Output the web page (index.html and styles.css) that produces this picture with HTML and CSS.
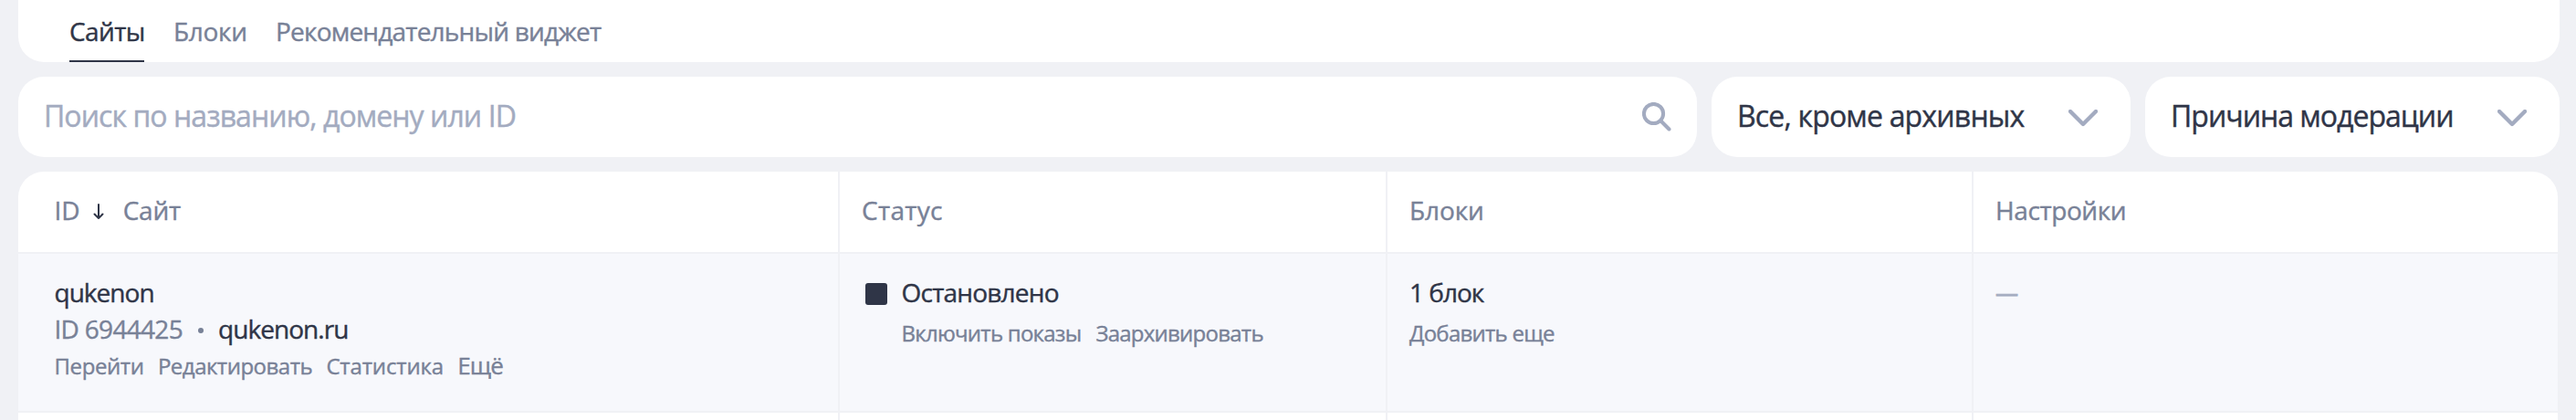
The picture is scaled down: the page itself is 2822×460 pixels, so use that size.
FILE: index.html
```
<!DOCTYPE html>
<html lang="ru">
<head>
    <meta charset="UTF-8">
    <meta name="viewport" content="width=device-width, initial-scale=1.0">
    <title>Сайты</title>
    <link rel="stylesheet" href="styles.css">
</head>
<body>
    <nav class="tabs">
        <a class="tab tab-sites active">Сайты</a>
        <a class="tab tab-blocks">Блоки</a>
        <a class="tab tab-widget">Рекомендательный виджет</a>
    </nav>

    <div class="filters">
        <div class="search">
            <span class="placeholder">Поиск по названию, домену или ID</span>
            <svg class="search-icon" width="32" height="32" viewBox="0 0 32 32">
                <circle cx="12.5" cy="12.5" r="10.6"/>
                <path d="M20.5 20.5l9 9"/>
            </svg>
        </div>
        <div class="select select-status">
            <span class="select-text">Все, кроме архивных</span>
            <svg class="chevron" width="32" height="20" viewBox="0 0 32 20"><path d="M2 2l14 14 14-14"/></svg>
        </div>
        <div class="select select-reason">
            <span class="select-text">Причина модерации</span>
            <svg class="chevron" width="32" height="20" viewBox="0 0 32 20"><path d="M2 2l14 14 14-14"/></svg>
        </div>
    </div>

    <div class="table">
        <div class="row head">
            <div class="cell">
                <span>ID</span>
                <svg class="sort" width="12" height="18" viewBox="0 0 12 18"><path d="M6 1v15M1.5 11.5L6 16l4.5-4.5"/></svg>
                <span class="head-site">Сайт</span>
            </div>
            <div class="cell head-status">Статус</div>
            <div class="cell head-blocks">Блоки</div>
            <div class="cell head-settings">Настройки</div>
        </div>

        <div class="row site">
            <div class="cell">
                <div class="line name">qukenon</div>
                <div class="line">
                    <span class="site-id">ID 6944425</span>
                    <span class="dot"></span>
                    <span class="domain">qukenon.ru</span>
                </div>
                <div class="links">
                    <a class="link-go">Перейти</a>
                    <a class="link-edit">Редактировать</a>
                    <a class="link-stat">Статистика</a>
                    <a class="link-more">Ещё</a>
                </div>
            </div>
            <div class="cell">
                <div class="line">
                    <span class="stopped"></span>
                    <span class="state">Остановлено</span>
                </div>
                <div class="links tall state-links">
                    <a>Включить показы</a>
                    <a>Заархивировать</a>
                </div>
            </div>
            <div class="cell">
                <div class="line count">1 блок</div>
                <div class="links tall"><a>Добавить еще</a></div>
            </div>
            <div class="cell">
                <div class="line empty">—</div>
            </div>
        </div>

        <div class="row next">
            <div class="cell"></div>
            <div class="cell"></div>
            <div class="cell"></div>
            <div class="cell"></div>
        </div>
    </div>
</body>
</html>
```
FILE: styles.css
```
* {
    margin: 0;
    padding: 0;
    box-sizing: border-box;
}

body {
    background: #f0f1f5;
    color: #2f3547;
    font-family: "Open Sans", "Noto Sans", sans-serif;
    font-size: 28px;
    height: 460px;
    padding: 0 18px 0 20px;
    overflow: hidden;
    white-space: nowrap;
    -webkit-text-stroke: 0.4px;
}

/* tabs */
.tabs {
    display: flex;
    gap: 32px;
    height: 68px;
    padding-left: 56px;
    background: #fff;
    border-radius: 0 0 28px 28px;
}

.tab {
    line-height: 68px;
    color: #788197;
}

.tab.active {
    color: #2f3547;
    box-shadow: inset 0 -2px #2f3547;
}

.tab-sites {
    width: 82px;
    letter-spacing: -0.6px;
}

.tab-blocks {
    width: 80px;
    letter-spacing: -0.3px;
}

.tab-widget {
    letter-spacing: -0.8px;
}

/* filters */
.filters {
    display: flex;
    gap: 16px;
    margin: 16px 0;
    font-size: 32px;
}

.search,
.select {
    display: flex;
    justify-content: space-between;
    height: 88px;
    line-height: 86px;
    padding-left: 28px;
    background: #fff;
    border-radius: 28px;
}

.search {
    flex: 1;
    padding-right: 28px;
}

.placeholder {
    color: #a3abc0;
    letter-spacing: -0.94px;
}

.select {
    padding-right: 36px;
}

.select-status {
    width: 459px;
    letter-spacing: -0.82px;
}

.select-reason {
    width: 454px;
    letter-spacing: -1px;
}

.search-icon,
.chevron {
    fill: none;
    stroke: #a3abc0;
    stroke-width: 4;
    stroke-linecap: round;
    stroke-linejoin: round;
}

.search-icon {
    margin-top: 28px;
}

.chevron {
    margin-top: 36px;
    stroke-width: 4.4;
}

/* table */
.table {
    width: 2782px;
    background: #fff;
    border-radius: 28px 28px 0 0;
}

.row {
    display: grid;
    grid-template-columns: 900px 600px 642px 1fr;
    border-bottom: 2px solid #f0f1f5;
}

.cell {
    padding-left: 24px;
    border-right: 2px solid #f0f1f5;
}

.cell:first-child {
    padding-left: 39.5px;
}

.cell:last-child {
    border-right: none;
}

.head .cell {
    display: flex;
    height: 88px;
    line-height: 84px;
    color: #788197;
}

.sort {
    margin: 35px 21px 0 14px;
    fill: none;
    stroke: #2f3547;
    stroke-width: 2;
    stroke-linecap: round;
    stroke-linejoin: round;
}

.head-site {
    letter-spacing: -0.2px;
}

.head-status {
    letter-spacing: 0.3px;
}

.head-blocks {
    letter-spacing: -0.1px;
}

.head-settings {
    letter-spacing: -0.4px;
}

.site {
    background: #f7f8fc;
}

.site .cell {
    height: 172px;
    padding-top: 22px;
}

.line {
    display: flex;
    align-items: center;
    height: 40px;
    line-height: 40px;
}

.name {
    letter-spacing: -0.97px;
}

.site-id {
    color: #788197;
    letter-spacing: -0.7px;
}

.dot {
    width: 6px;
    height: 6px;
    margin: 4px 16px 0 17px;
    border-radius: 50%;
    background: #788197;
}

.domain {
    letter-spacing: -0.95px;
}

.links {
    display: flex;
    align-items: baseline;
    gap: 15.3px;
    height: 41px;
    font-size: 24px;
    line-height: 41px;
    color: #788197;
}

.links.tall {
    height: 49px;
    line-height: 49px;
    letter-spacing: -0.75px;
}

.link-go {
    letter-spacing: -0.4px;
}

.link-edit {
    letter-spacing: -0.5px;
}

.link-stat {
    letter-spacing: -0.15px;
}

.link-more {
    font-size: 26px;
    letter-spacing: -0.9px;
}

.stopped {
    width: 24px;
    height: 24px;
    margin: 4px 15.5px 0 4px;
    border-radius: 3px;
    background: #2f3547;
}

.state {
    letter-spacing: -0.78px;
}

.state-links {
    gap: 16px;
    padding-left: 43.5px;
}

.count {
    letter-spacing: -1px;
}

.empty {
    font-size: 25px;
    color: #a3abc0;
    -webkit-text-stroke: 0.8px;
}

.next {
    border-bottom: none;
}

.next .cell {
    height: 8px;
}
```
